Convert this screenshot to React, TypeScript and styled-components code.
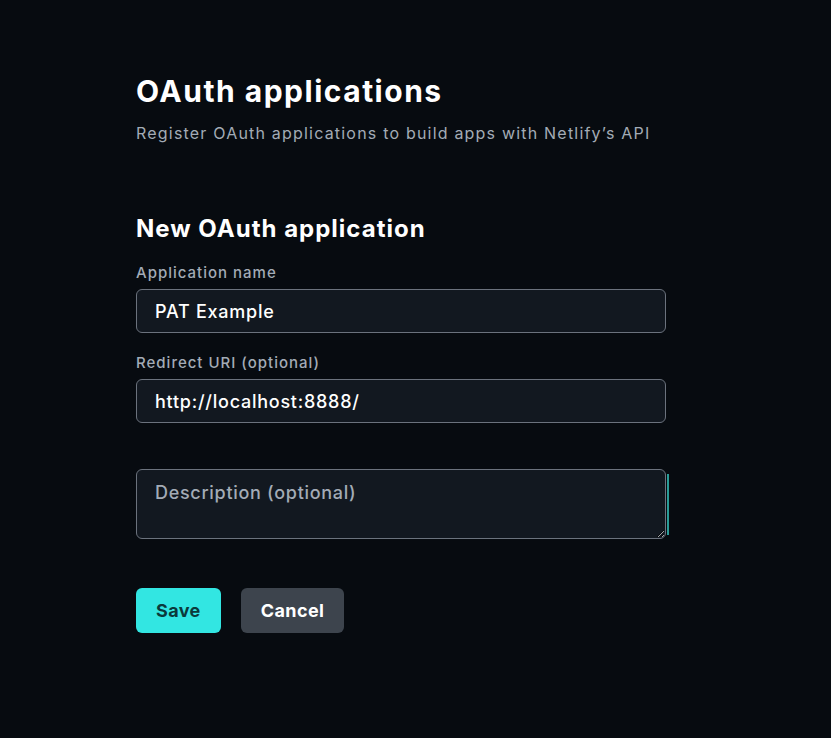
import * as React from 'react'
import styled, { createGlobalStyle } from 'styled-components'

const colors = {
  page: '#070b10',
  field: '#121820',
  border: '#6b727d',
  white: '#ffffff',
  muted: '#a3abb6',
  teal: '#32e6e2',
  tealDark: '#0b3a3b',
  grey: '#3d444d',
}

const GlobalStyle = createGlobalStyle`
  html, body {
    margin: 0;
    padding: 0;
    background: ${colors.page};
    font-family: Inter, "Liberation Sans", sans-serif;
    color: ${colors.white};
  }
  * {
    box-sizing: border-box;
  }
`

const Page = styled.main`
  min-height: 738px;
  padding: 72px 0 0 136px;
`

const Header = styled.header`
  display: flex;
  flex-direction: column;
  gap: 11px;
  margin-bottom: 68px;
`

const Title = styled.h1`
  margin: 0;
  font-size: 30px;
  line-height: 38px;
  font-weight: 700;
  letter-spacing: 1.5px;
`

const Subtitle = styled.p`
  margin: 0;
  font-size: 16px;
  line-height: 24px;
  color: ${colors.muted};
  letter-spacing: 1.2px;
`

const Form = styled.form`
  width: 530px;
  display: flex;
  flex-direction: column;
`

const SectionTitle = styled.h2`
  margin: 0 0 18px;
  font-size: 24px;
  line-height: 32px;
  font-weight: 700;
  letter-spacing: 1px;
`

const Field = styled.label<{ $gap?: number }>`
  display: flex;
  flex-direction: column;
  gap: 6px;
  margin-bottom: ${({ $gap }) => $gap ?? 20}px;
`

const Label = styled.span`
  font-size: 15px;
  line-height: 20px;
  font-weight: 500;
  color: ${colors.muted};
  letter-spacing: 1px;
`

const Input = styled.input`
  height: 44px;
  width: 100%;
  padding: 0 18px;
  border: 1px solid ${colors.border};
  border-radius: 6px;
  background: ${colors.field};
  color: ${colors.white};
  font-family: inherit;
  font-size: 18px;
  font-weight: 500;
  letter-spacing: 0.75px;
  outline: none;
`

const TextAreaWrap = styled.div`
  position: relative;
  margin-bottom: 49px;
  &::after {
    content: '';
    position: absolute;
    top: 5px;
    bottom: 4px;
    right: -3px;
    width: 2px;
    background: #2a9c98;
  }
`

const TextArea = styled.textarea`
  display: block;
  width: 100%;
  height: 70px;
  padding: 12px 18px;
  border: 1px solid ${colors.border};
  border-radius: 6px;
  background: ${colors.field};
  color: ${colors.white};
  font-family: inherit;
  font-size: 18px;
  font-weight: 500;
  letter-spacing: 0.7px;
  resize: vertical;
  outline: none;
  &::placeholder {
    color: ${colors.muted};
  }
`

const Actions = styled.div`
  display: flex;
  gap: 20px;
`

const Button = styled.button<{ $primary?: boolean }>`
  height: 45px;
  padding: 0 20px;
  border: none;
  border-radius: 6px;
  font-family: inherit;
  font-size: 18px;
  font-weight: 700;
  letter-spacing: 0.4px;
  cursor: pointer;
  background: ${({ $primary }) => ($primary ? colors.teal : colors.grey)};
  color: ${({ $primary }) => ($primary ? colors.tealDark : colors.white)};
`

const App = () => (
  <>
    <GlobalStyle />
    <Page>
      <Header>
        <Title>OAuth applications</Title>
        <Subtitle>Register OAuth applications to build apps with Netlify’s API</Subtitle>
      </Header>
      <Form onSubmit={(e) => e.preventDefault()}>
        <SectionTitle>New OAuth application</SectionTitle>
        <Field>
          <Label>Application name</Label>
          <Input defaultValue="PAT Example" />
        </Field>
        <Field $gap={46}>
          <Label>Redirect URI (optional)</Label>
          <Input defaultValue="http://localhost:8888/" />
        </Field>
        <TextAreaWrap>
          <TextArea placeholder="Description (optional)" />
        </TextAreaWrap>
        <Actions>
          <Button $primary type="submit">Save</Button>
          <Button type="button">Cancel</Button>
        </Actions>
      </Form>
    </Page>
  </>
)

export default App
